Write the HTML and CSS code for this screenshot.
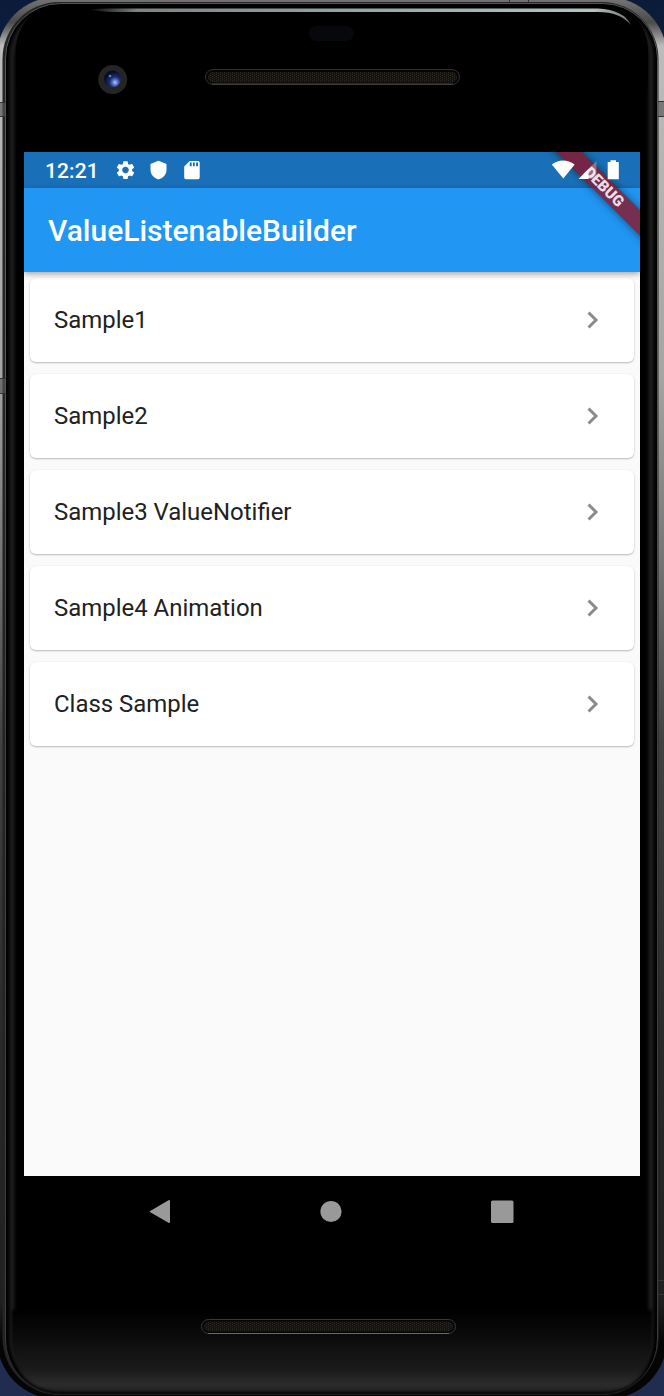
FILE: index.html
```html
<!DOCTYPE html>
<html lang="en">
<head>
<meta charset="utf-8">
<title>ValueListenableBuilder</title>
<link rel="stylesheet" href="styles.css">
</head>
<body>
<main class="device">
  <svg class="shell" viewBox="0 0 664 1396" width="664" height="1396" aria-hidden="true">
    <defs>
      <linearGradient id="metal" x1="0" y1="0" x2="0" y2="1">
        <stop offset="0" stop-color="#777"/><stop offset=".018" stop-color="#4a4a4a"/><stop offset=".035" stop-color="#bcbcbc"/><stop offset=".27" stop-color="#a5a5a3"/>
        <stop offset=".4" stop-color="#757575"/><stop offset=".53" stop-color="#414141"/><stop offset=".75" stop-color="#292929"/><stop offset=".93" stop-color="#202020"/><stop offset=".96" stop-color="#050505"/>
      </linearGradient>
      <linearGradient id="rim" x1="0" y1="0" x2="0" y2="1">
        <stop offset="0" stop-color="#555"/><stop offset=".2" stop-color="#606060"/><stop offset=".5" stop-color="#444"/><stop offset=".96" stop-color="#3a3e41"/><stop offset="1" stop-color="#111"/>
      </linearGradient>
      <linearGradient id="shine" x1="88" x2="632" y1="0" y2="0" gradientUnits="userSpaceOnUse">
        <stop offset="0" stop-color="#000"/><stop offset=".09" stop-color="#7c8485"/><stop offset=".5" stop-color="#98a4a8"/><stop offset=".93" stop-color="#b6c2c2"/><stop offset="1" stop-color="#687473"/>
      </linearGradient>
      <linearGradient id="chin" x1="0" y1="1310" x2="0" y2="1394" gradientUnits="userSpaceOnUse">
        <stop offset="0" stop-color="#000"/><stop offset=".35" stop-color="#0c0c0c"/><stop offset=".7" stop-color="#1a1a1a"/><stop offset=".9" stop-color="#2c2c2c"/><stop offset="1" stop-color="#181818"/>
      </linearGradient>
      <radialGradient id="lens" cx=".65" cy=".7" r=".65">
        <stop offset="0" stop-color="#b5c9ff"/><stop offset=".25" stop-color="#5672c8"/><stop offset=".5" stop-color="#1c2c72"/><stop offset="1" stop-color="#080b24"/>
      </radialGradient>
      <pattern id="mesh" width="4" height="2" patternUnits="userSpaceOnUse">
        <rect width="4" height="2" fill="#14120f"/><rect width="1" height="1" fill="#2f2b25"/><rect x="2" y="1" width="1" height="1" fill="#2b2722"/>
      </pattern>
      <filter id="soft" color-interpolation-filters="sRGB"><feGaussianBlur stdDeviation="1.5"/></filter>
    </defs>
    <rect x="-3" y="-3" width="670" height="1402" rx="60" fill="url(#metal)"/>
    <rect x="2.500" y="2" width="656" height="1393" rx="57" fill="#242424"/>
    <rect x="5.500" y="3.500" width="652" height="1390.500" rx="55" fill="#000" stroke="url(#rim)"/>
    <rect x="12" y="10" width="639" height="1377" rx="48" fill="none" stroke="#1d1d1d" stroke-width="5" filter="url(#soft)"/>
    <rect x="16" y="5" width="632" height="120" rx="44" fill="#000"/>
    <path d="M12 1310H652V1340Q650 1392 600 1392H64Q14 1392 12 1340Z" fill="url(#chin)" filter="url(#soft)"/>
    <path d="M88 9.500Q98 8.500 110 8.500H598Q624 10 631 25Q620 12 598 12H110Q98 11 88 9.500Z" fill="url(#shine)"/>
    <path d="M0 102.500H6M0 116.500H6M0 378.500H6M0 393.500H6M658 101.500H664M658 116.500H664M658 1280.500H664M658 1294.500H664" stroke="#333"/>
    <path d="M0 103H5.500V116H0ZM0 379H5.500V393H0ZM658 102H664V116H658Z" fill="#555" opacity=".65"/>
    <path d="M509.500 0V2M528.500 0V2" stroke="#333"/>
    <rect x="309" y="26" width="45" height="15" rx="7.500" fill="#07080c"/>
    <circle cx="112.700" cy="79.500" r="14.500" fill="#252525"/>
    <circle cx="112.500" cy="79" r="8.500" fill="url(#lens)"/>
    <circle cx="110" cy="76" r="1.300" fill="#6079ba"/>
    <rect x="205.500" y="69.500" width="254" height="15" rx="7.500" fill="#050505" stroke="#303030"/>
    <rect x="208" y="72" width="249" height="10.500" rx="5" fill="url(#mesh)"/>
    <path d="M212 84H453" stroke="#4a4845"/>
    <rect x="201.500" y="1319.500" width="254" height="14" rx="7" fill="#050505" stroke="#393939"/>
    <rect x="204" y="1321.500" width="249" height="10" rx="5" fill="url(#mesh)"/>
    <path d="M208 1333.500H449" stroke="#6c6a66"/>
  </svg>

  <section class="screen">
    <header class="status">
      <time class="clock">12:21</time>
      <svg class="left-icons" width="88" height="24" viewBox="0 0 88 24" fill="#fff">
        <path transform="translate(-1.600 1) scale(.925)" d="M19.140 12.940c.04-.3.060-.61.060-.94 0-.32-.02-.64-.07-.94l2.030-1.580c.18-.14.23-.41.120-.61l-1.920-3.320c-.12-.22-.37-.29-.59-.22l-2.390.96c-.5-.38-1.030-.7-1.620-.94l-.36-2.540c-.04-.24-.24-.41-.48-.41h-3.840c-.24 0-.43.17-.47.410l-.36 2.540c-.59.24-1.130.57-1.620.94l-2.390-.96c-.22-.08-.47 0-.59.220L2.740 8.870c-.12.210-.08.470.120.610l2.030 1.580c-.05.3-.09.630-.09.940s.02.640.070.940l-2.030 1.580c-.18.140-.23.410-.12.610l1.920 3.320c.12.220.37.290.59.220l2.390-.96c.5.380 1.030.7 1.620.940l.36 2.540c.05.240.24.410.48.410h3.840c.24 0 .44-.17.470-.41l.36-2.540c.59-.24 1.130-.56 1.620-.94l2.390.96c.22.080.47 0 .59-.22l1.920-3.320c.12-.22.070-.47-.12-.61l-2.010-1.580zM12 15.600c-1.980 0-3.600-1.620-3.600-3.600s1.620-3.600 3.600-3.600 3.600 1.620 3.600 3.600-1.620 3.600-3.600 3.600z"/>
        <path d="M42.500 2.700 50.500 6V11.500C50.500 16.300 47.400 20 42.500 21.500 37.600 20 34.500 16.300 34.500 11.500V6Z"/>
        <path fill-rule="evenodd" d="M73.700 3H82Q83.700 3 83.700 4.700V19.500Q83.700 21.200 82 21.200H70Q68.200 21.200 68.200 19.500V8.500ZM73.800 4.500V8.300H75.700V4.500ZM77 4.500V8.300H78.800V4.500ZM80.100 4.500V8.300H82V4.500Z"/>
      </svg>
      <svg class="right-icons" width="70" height="24" viewBox="0 0 70 24" fill="#fff">
        <path d="M.8 6.500Q12 -1.300 23.700 6.500L12.300 20.500Z"/>
        <path d="M27.500 21 45.500 3V21Z" opacity=".3"/>
        <path d="M27.500 21 37.500 11V21Z"/>
        <path d="M56.700 4H59.500V2.200H65V4H67.800V21.200H56.700Z"/>
      </svg>
    </header>
    <div class="appbar"><h1 class="title">ValueListenableBuilder</h1></div>
    <ul class="list">
      <li class="card"><span>Sample1</span><svg class="chevron" viewBox="0 0 12 18"><path d="M1.500 1.500 9 9 1.500 16.500"/></svg></li>
      <li class="card"><span>Sample2</span><svg class="chevron" viewBox="0 0 12 18"><path d="M1.500 1.500 9 9 1.500 16.500"/></svg></li>
      <li class="card"><span>Sample3 ValueNotifier</span><svg class="chevron" viewBox="0 0 12 18"><path d="M1.500 1.500 9 9 1.500 16.500"/></svg></li>
      <li class="card"><span>Sample4 Animation</span><svg class="chevron" viewBox="0 0 12 18"><path d="M1.500 1.500 9 9 1.500 16.500"/></svg></li>
      <li class="card"><span>Class Sample</span><svg class="chevron" viewBox="0 0 12 18"><path d="M1.500 1.500 9 9 1.500 16.500"/></svg></li>
    </ul>
    <div class="debug">DEBUG</div>
  </section>

  <nav class="nav">
    <svg width="24" height="26" viewBox="0 0 24 26"><path d="M2.200 12 20.500 1.200Q22 .5 22 2V23Q22 24.500 20.500 23.800L2.200 13.200Q1 12.500 2.200 12Z"/></svg>
    <svg width="24" height="26" viewBox="0 0 24 26"><circle cx="12" cy="12.500" r="10.600"/></svg>
    <svg width="24" height="26" viewBox="0 0 24 26"><rect x="1" y="1.500" width="22.500" height="22.500" rx="1.500"/></svg>
  </nav>
</main>
</body>
</html>
```
FILE: styles.css
```css
* { box-sizing: border-box; }
body {
  margin: 0;
  background: #12203d;
  font-family: Roboto, sans-serif;
}
.device {
  position: relative;
  width: 664px;
  height: 1396px;
  padding: 152px 24px 0;
  overflow: hidden;
  background: linear-gradient(#0b1c3b, #202d50);
}
.shell {
  position: absolute;
  inset: 0;
}
.screen {
  position: relative;
  display: flex;
  flex-direction: column;
  height: 1024px;
  overflow: hidden;
  background: #fafafa;
}
.status {
  display: flex;
  align-items: center;
  height: 36px;
  padding: 0 19px 0 21px;
  background: #1a70b8;
  color: #fff;
}
.clock {
  width: 71px;
  padding-top: 2px;
  font-size: 21px;
  font-weight: 500;
  letter-spacing: .1px;
}
.left-icons { flex: none; }
.right-icons {
  z-index: 3;
  margin-left: auto;
}
.appbar {
  z-index: 1;
  display: flex;
  align-items: center;
  height: 84px;
  padding: 0 24px;
  background: #2196f3;
  box-shadow: 0 2px 6px rgba(0, 0, 0, .35);
}
.title {
  margin: 0;
  color: #fff;
  font-size: 30px;
  font-weight: 500;
}
.list {
  display: flex;
  flex-direction: column;
  gap: 12px;
  margin: 0;
  padding: 6px;
  list-style: none;
}
.card {
  display: flex;
  align-items: center;
  justify-content: space-between;
  height: 84px;
  padding: 0 35px 0 24px;
  border-radius: 6px;
  background: #fff;
  background-clip: padding-box;
  box-shadow: 0 1px 2px rgba(0, 0, 0, .25), 0 0 2px rgba(0, 0, 0, .05);
  color: #212121;
  font-size: 23.950px;
}
.chevron {
  width: 12px;
  height: 18px;
  fill: none;
  stroke: #8b8b8b;
  stroke-width: 3;
}
.debug {
  position: absolute;
  z-index: 2;
  top: 26px;
  left: 505px;
  width: 150px;
  height: 18px;
  transform: rotate(45deg);
  background: rgba(145, 16, 32, .77);
  box-shadow: 0 0 9px rgba(0, 0, 0, .5);
  color: rgba(255, 255, 255, .86);
  font-size: 15.300px;
  font-weight: 900;
  line-height: 18px;
  text-align: center;
}
.status svg { position: relative; }
.nav {
  position: relative;
  display: flex;
  justify-content: space-between;
  padding: 23px 126px 0 124px;
  fill: #999;
}
```
